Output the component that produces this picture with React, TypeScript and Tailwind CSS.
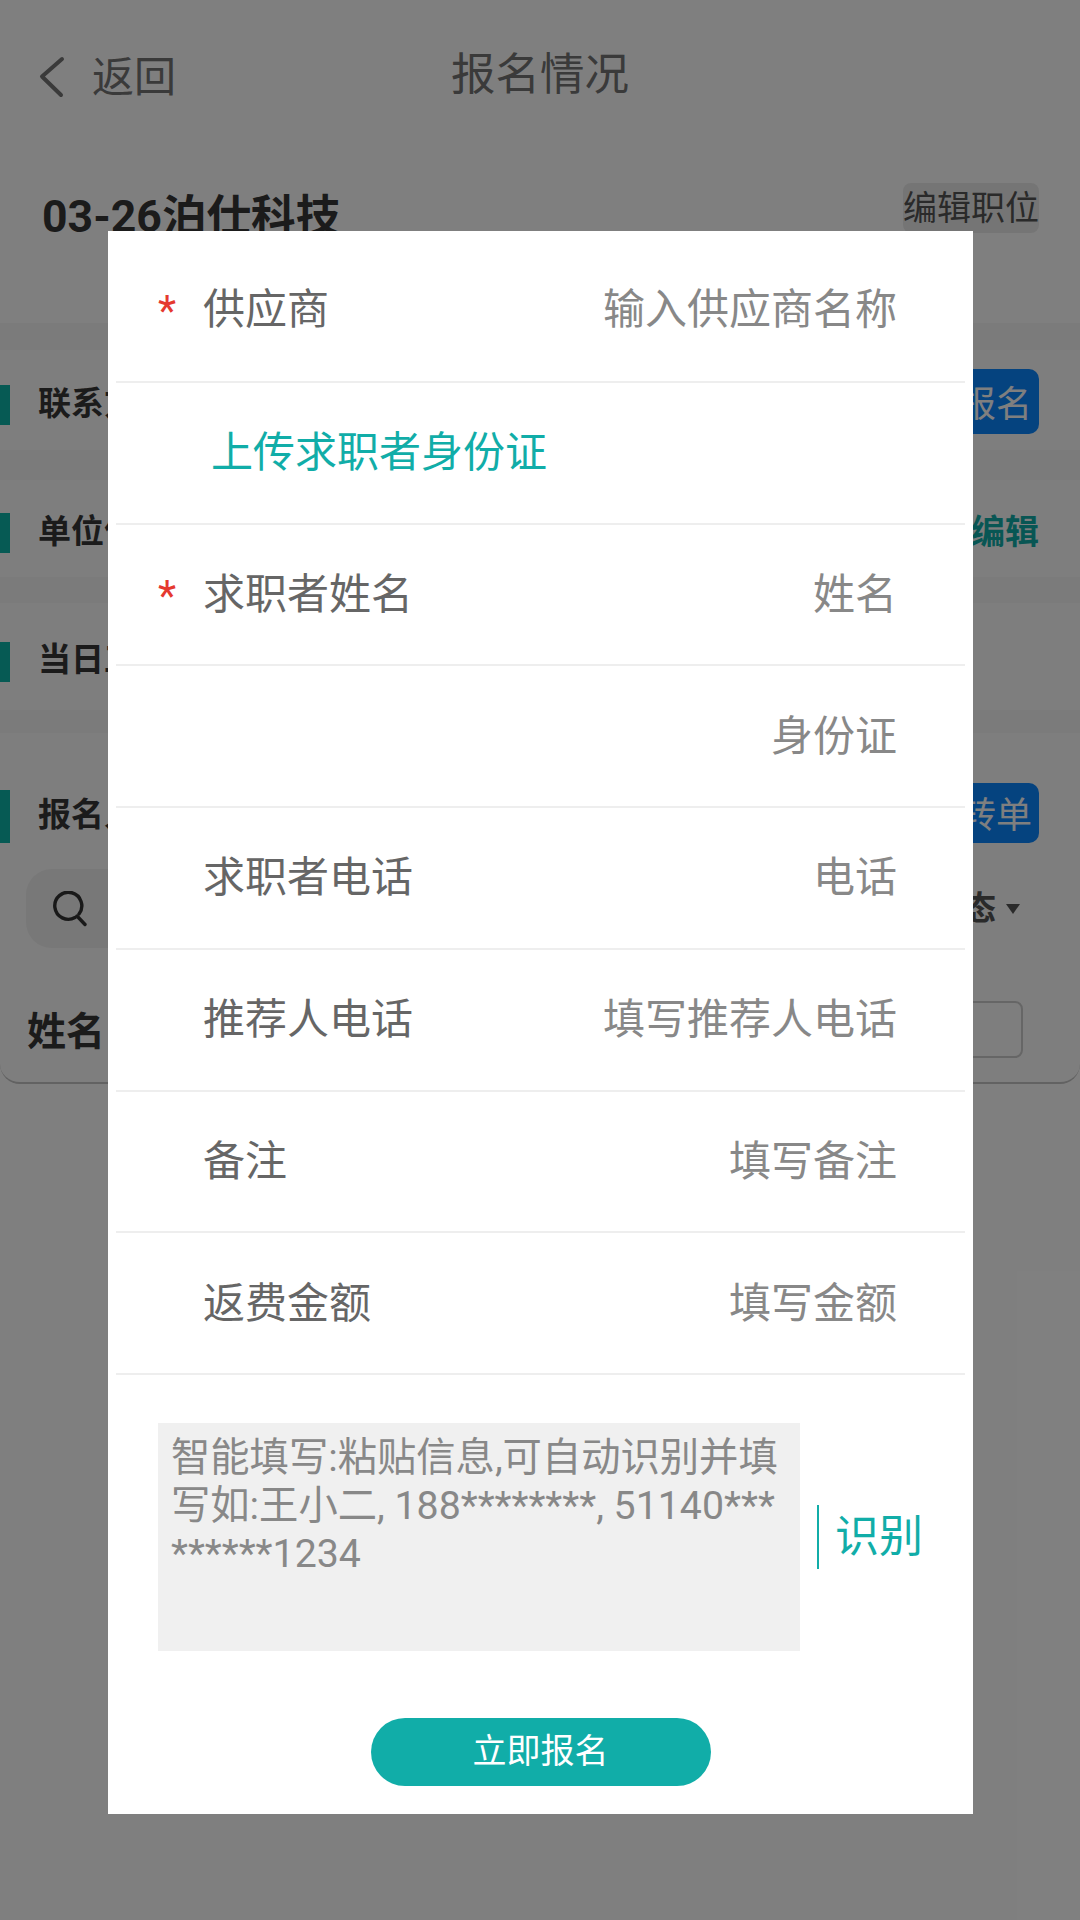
import React from 'react';

const fontClass = "font-['Roboto','Noto_Sans_CJK_SC',sans-serif]";

interface FormRowProps {
  label: string;
  placeholder: string;
  required?: boolean;
  className?: string;
}

const rowsAfterUpload: FormRowProps[] = [
  { label: '求职者姓名', placeholder: '姓名', required: true },
  { label: '', placeholder: '身份证' },
  { label: '求职者电话', placeholder: '电话' },
  { label: '推荐人电话', placeholder: '填写推荐人电话' },
  { label: '备注', placeholder: '填写备注' },
  { label: '返费金额', placeholder: '填写金额' },
];

const FormRow: React.FC<FormRowProps> = ({ label, placeholder, required, className }) => (
  <div className={`flex h-[141.75px] items-center border-b-2 border-[#eeeeee] pl-[42px] pr-[68px] text-[42px] ${className ?? ''}`}>
    <span className="w-[45px] translate-y-[1px] text-[#e5392f]">{required ? '*' : ''}</span>
    <span className="flex-1 text-[#666666]">{label}</span>
    <span className="text-[#888888]">{placeholder}</span>
  </div>
);

const SectionTitle: React.FC<{ title: string; className?: string }> = ({ title, className }) => (
  <span className={`ml-[28px] text-[33px] font-bold whitespace-nowrap text-[#363636] ${className ?? ''}`}>{title}</span>
);

export default function App() {
  return (
    <div className={`relative h-[1920px] w-[1080px] overflow-hidden bg-white ${fontClass}`}>
      {/* Page behind the dialog */}
      <div className="grid h-[146px] grid-cols-3 items-center px-[38px]">
        <div className="flex items-center gap-[26px] pt-[8px]">
          <svg width="28" height="42" viewBox="0 0 28 42" fill="none" stroke="#747474" strokeWidth="4" strokeLinecap="round" strokeLinejoin="round">
            <path d="M24 3L4 20.5L23 39" />
          </svg>
          <span className="text-[42px] text-[#747474]">返回</span>
        </div>
        <span className="mt-[4px] text-center text-[44.5px] whitespace-nowrap text-[#747474]">报名情况</span>
      </div>

      <div className="flex h-[177px] items-start justify-between pt-[37px] pr-[41px] pl-[42px]">
        <span className="mt-[1px] text-[44.6px] leading-[66px] font-bold text-[#363636]">03-26泊仕科技</span>
        <span className="flex h-[50px] w-[136px] items-center justify-center rounded-[8px] bg-[#ebebeb] text-[34px] whitespace-nowrap text-[#555555]">编辑职位</span>
      </div>

      <div className="h-[27px] bg-[#f7f7f7]" />

      {/* 联系 */}
      <div className="flex h-[100px] items-center justify-between bg-[#fcfcfc] pr-[41px]">
        <div className="flex items-center">
          <span className="mt-[10px] h-[40px] w-[10px] bg-[#0cb5a8]" />
          <SectionTitle title="联系方式" className="mt-[8px]" />
        </div>
        <span className="mt-[3px] flex h-[65px] w-[160px] items-center justify-end rounded-[10px] bg-[#0a86ff] pt-[6px] pr-[7px] text-[36px] text-white">确认报名</span>
      </div>

      <div className="h-[30px] bg-[#f7f7f7]" />

      {/* 单位 */}
      <div className="flex h-[97px] items-center justify-between bg-[#fcfcfc] pr-[41px]">
        <div className="flex items-center">
          <span className="mt-[9px] h-[40px] w-[10px] bg-[#0cb5a8]" />
          <SectionTitle title="单位信息" className="mt-[6px]" />
        </div>
        <span className="mt-[8px] text-[34px] font-bold text-[#11ada8]">编辑</span>
      </div>

      <div className="h-[26px] bg-[#f7f7f7]" />

      {/* 当日 */}
      <div className="flex h-[107px] items-center bg-[#fcfcfc]">
        <span className="mt-[11px] h-[40px] w-[10px] bg-[#0cb5a8]" />
        <SectionTitle title="当日工价" className="mt-[6px]" />
      </div>

      <div className="h-[23px] bg-[#f7f7f7]" />

      {/* 报名列表 */}
      <div className="h-[351px] rounded-b-[20px] border-b-2 border-[#c4c4c4] bg-[#fcfcfc]">
        <div className="flex h-[110px] items-end justify-between pr-[41px]">
          <div className="flex items-center">
            <span className="h-[53px] w-[10px] bg-[#0cb5a8]" />
            <SectionTitle title="报名人员" className="-mt-[3px]" />
          </div>
          <span className="flex h-[60px] w-[160px] items-center justify-end rounded-[10px] bg-[#0a86ff] pt-[6px] pr-[7px] text-[36px] text-white">批量转单</span>
        </div>

        <div className="mt-[26px] flex items-center justify-between pr-[60px] pl-[26px]">
          <div className="flex h-[79px] w-[700px] items-center rounded-[26px] bg-[#f0f0f0] pl-[27px]">
            <svg width="34" height="36" viewBox="0 0 34 36" fill="none" stroke="#333333" strokeWidth="3.4" strokeLinecap="round">
              <path d="M22 26.5A13.5 13.5 0 1 1 26 23" />
              <path d="M24 25L32 33.5" />
            </svg>
          </div>
          <div className="flex items-center gap-[10px]">
            <span className="text-[33px] font-bold text-[#555555]">状态</span>
            <span className="h-0 w-0 border-x-[7px] border-t-[10px] border-x-transparent border-t-[#555555]" />
          </div>
        </div>

        <div className="mt-[53px] flex items-center justify-between pr-[57px] pl-[27px]">
          <span className="mt-[5px] text-[39px] leading-none font-bold text-[#363636]">姓名</span>
          <span className="h-[57px] w-[300px] rounded-[8px] border-2 border-[#cccccc]" />
        </div>
      </div>

      {/* Dialog */}
      <div className="absolute inset-0 bg-black/50 pt-[231px] pl-[108px]">
        <div className="flex h-[1583px] w-[865px] flex-col bg-white px-[8px] pt-[10px]">
          <FormRow label="供应商" placeholder="输入供应商名称" required className="pb-[2px]" />
          <div className="flex h-[141.75px] items-center border-b-2 border-[#eeeeee] pl-[95px] text-[42px] text-[#11ada8]">
            上传求职者身份证
          </div>
          {rowsAfterUpload.map((row) => (
            <FormRow key={row.placeholder} {...row} />
          ))}

          <div className="mt-[47.5px] flex items-center pl-[42px]">
            <div className="h-[228px] w-[642px] bg-[#f0f0f0] pt-[11px] pl-[13px] text-[39.3px] leading-[48px] text-[#888888]">
              <p className="whitespace-nowrap">智能填写:粘贴信息,可自动识别并填</p>
              <p className="whitespace-nowrap">写如:王小二, 188********, 51140***</p>
              <p className="whitespace-nowrap">******1234</p>
            </div>
            <span className="ml-[17px] h-[64px] w-[2px] bg-[#11ada8]" />
            <span className="ml-[16px] text-[44px] text-[#11ada8]">识别</span>
          </div>

          <button className="mx-auto mt-[67px] flex h-[68px] w-[340px] items-center justify-center rounded-[34px] bg-[#11ada8] text-[34px] text-white">
            立即报名
          </button>
        </div>
      </div>
    </div>
  );
}
